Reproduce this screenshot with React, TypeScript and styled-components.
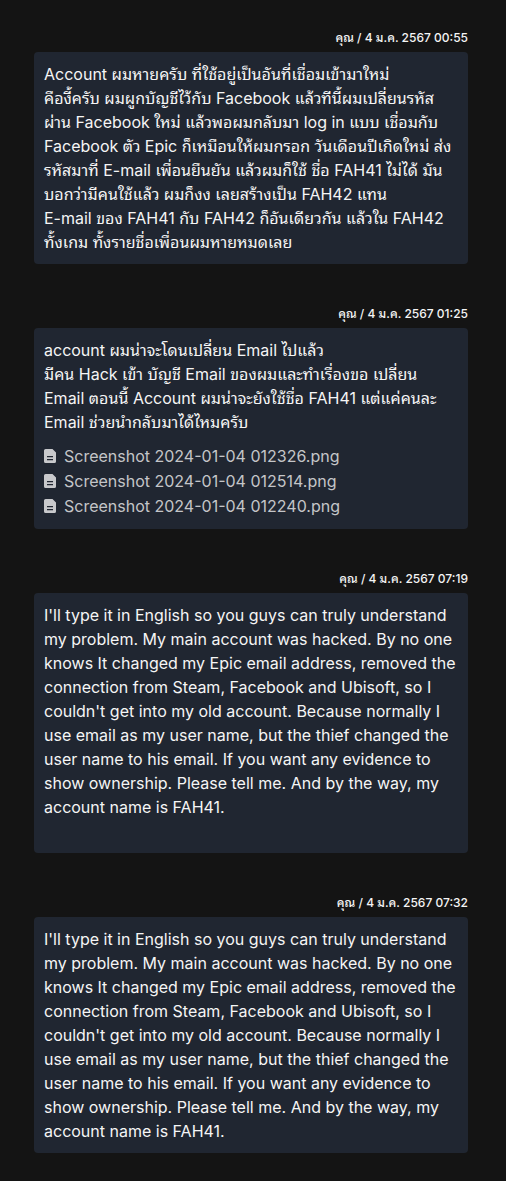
import React from "react";
import styled, { createGlobalStyle } from "styled-components";

const GlobalStyle = createGlobalStyle`
  * { box-sizing: border-box; }
  html { background: #141414; }
  body {
    margin: 0;
    color: #f5f5f5;
    font-family: Inter, "Noto Sans Thai Looped", Loma, "Leelawadee UI", Tahoma, "Noto Sans Thai", "Noto Sans", sans-serif;
    font-size: 16px;
    line-height: 24px;
  }
`;

const Thread = styled.main`
  display: flex;
  flex-direction: column;
  gap: 24px;
  padding: 12px 38px 28px 34px;
`;

const Message = styled.article`
  display: flex;
  flex-direction: column;
`;

const Meta = styled.header`
  height: 40px;
  padding-top: 16px;
  font-size: 12px;
  line-height: 20px;
  font-weight: 500;
  text-align: right;
  white-space: nowrap;
`;

const Card = styled.div`
  display: flex;
  flex-direction: column;
  gap: 10px;
  padding: 10px;
  border-radius: 4px;
  background: #202631;
`;

const Body = styled.p`
  margin: 0;
  white-space: pre-wrap;
`;

const Files = styled.ul`
  margin: 0;
  padding: 0;
  list-style: none;
`;

const FileLink = styled.a`
  display: flex;
  align-items: center;
  gap: 8px;
  height: 25px;
  padding-bottom: 2px;
  color: #c4c5c8;
  text-decoration: none;
`;

const FileIcon = () => (
  <svg width="12" height="14" viewBox="0 0 12 14" aria-hidden="true">
    <path
      fill="#c8c9cc"
      fillRule="evenodd"
      d="M1.6 0h6.9L12 3.5v8.9a1.6 1.6 0 0 1-1.6 1.6H1.6A1.6 1.6 0 0 1 0 12.4V1.6A1.6 1.6 0 0 1 1.6 0ZM3 7v1.2h6V7ZM3 10v1.2h6V10Z"
    />
  </svg>
);

const english =
  "I'll type it in English so you guys can truly understand my problem. My main account was hacked. By no one knows It changed my Epic email address, removed the connection from Steam, Facebook and Ubisoft, so I couldn't get into my old account. Because normally I use email as my user name, but the thief changed the user name to his email. If you want any evidence to show ownership. Please tell me. And by the way, my account name is FAH41.";

interface Entry {
  time: string;
  text: string;
  files?: string[];
}

const entries: Entry[] = [
  {
    time: "00:55",
    text: `Account ผมหายครับ ที่ใช้อยู่เป็นอันที่เชื่อมเข้ามาใหม่
คืองี้ครับ ผมผูกบัญชีไว้กับ Facebook แล้วทีนี้ผมเปลี่ยนรหัส
ผ่าน Facebook ใหม่ แล้วพอผมกลับมา log in แบบ เชื่อมกับ
Facebook ตัว Epic ก็เหมือนให้ผมกรอก วันเดือนปีเกิดใหม่ ส่ง
รหัสมาที่ E-mail เพื่อนยืนยัน แล้วผมก็ใช้ ชื่อ FAH41 ไม่ได้ มัน
บอกว่ามีคนใช้แล้ว ผมก็งง เลยสร้างเป็น FAH42 แทน
E-mail ของ FAH41 กับ FAH42 ก็อันเดียวกัน แล้วใน FAH42
ทั้งเกม ทั้งรายชื่อเพื่อนผมหายหมดเลย`,
  },
  {
    time: "01:25",
    text: `account ผมน่าจะโดนเปลี่ยน Email ไปแล้ว
มีคน Hack เข้า บัญชี Email ของผมและทำเรื่องขอ เปลี่ยน
Email ตอนนี้ Account ผมน่าจะยังใช้ชื่อ FAH41 แต่แค่คนละ
Email ช่วยนำกลับมาได้ไหมครับ`,
    files: [
      "Screenshot 2024-01-04 012326.png",
      "Screenshot 2024-01-04 012514.png",
      "Screenshot 2024-01-04 012240.png",
    ],
  },
  { time: "07:19", text: english + "\n\n" },
  { time: "07:32", text: english },
];

export default function App() {
  return (
    <>
      <GlobalStyle />
      <Thread>
        {entries.map((entry) => (
          <Message key={entry.time}>
            <Meta>คุณ / 4 ม.ค. 2567 {entry.time}</Meta>
            <Card>
              <Body>{entry.text}</Body>
              {entry.files && (
                <Files>
                  {entry.files.map((name) => (
                    <li key={name}>
                      <FileLink href="#">
                        <FileIcon />
                        {name}
                      </FileLink>
                    </li>
                  ))}
                </Files>
              )}
            </Card>
          </Message>
        ))}
      </Thread>
    </>
  );
}
